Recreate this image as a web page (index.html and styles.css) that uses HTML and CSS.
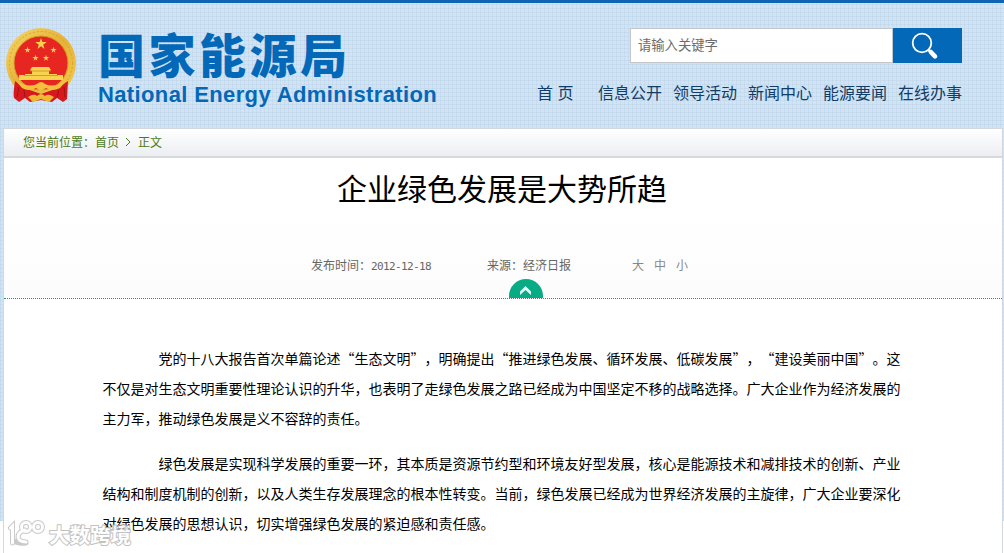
FILE: index.html
```
<!DOCTYPE html>
<html lang="zh-CN">
<head>
<meta charset="utf-8">
<title>企业绿色发展是大势所趋</title>
<link rel="stylesheet" href="styles.css">
</head>
<body>
<header class="header">
  <div class="brand">
    <svg class="emblem" width="72" height="76" viewBox="0 0 72 76">
      <defs>
        <linearGradient id="gold" x1="0" y1="0" x2="1" y2="1">
          <stop offset="0" stop-color="#f6d765"/><stop offset=".5" stop-color="#e6b238"/><stop offset="1" stop-color="#f4cb4c"/>
        </linearGradient>
        <path id="star" d="M0-6 1.4-1.9 5.7-1.9 2.2.7 3.5 4.9 0 2.3-3.5 4.9-2.2.7-5.7-1.9-1.4-1.9Z"/>
      </defs>
      <circle cx="36" cy="35" r="35" fill="url(#gold)"/>
      <circle cx="36" cy="35" r="31.5" fill="none" stroke="#d49c2a" stroke-width=".8" stroke-dasharray="2 2"/>
      <circle cx="36" cy="35" r="27" fill="#e72621" stroke="#d39a28" stroke-width="1"/>
      <g fill="#f8d34f">
        <use href="#star" x="36" y="16"/>
        <use href="#star" transform="translate(22.5 22) scale(.55)"/>
        <use href="#star" transform="translate(48.5 22) scale(.55)"/>
        <use href="#star" transform="translate(30.500 30) scale(.55)"/>
        <use href="#star" transform="translate(41 30) scale(.55)"/>
        <path d="M27 39h17l2 3-2 1v3h8v1h6v5H14v-5h6v-1h7v-3l-2-1Z"/>
      </g>
      <path d="M25 43h21M19 47.500h34" stroke="#d28a22" stroke-width=".8"/>
      <path d="M10 53C9 60 8 66 9 70L14 74 20 70 25 74 36 72 47 74 52 70 58 74 62 71 63 53 53 60 36 66 19 60Z" fill="#d7191d"/>
      <path d="M12 54Q24 60 32 56Q36 52 40 56Q48 60 60 54L55 60Q47 64 41 60L36 63 31 60Q24 64 17 60Z" fill="#f3c13d"/>
      <path d="M23 69Q29 65 32 68Q36 64 40 68Q43 65 49 69L44 74 36 71 28 74Z" fill="#f0b832"/>
      <path d="M14 59 12 69M19 62 20 69M54 62 52 69M59 59 60 69" stroke="#a01216" stroke-width="1"/>
    </svg>
    <div class="names">
      <div class="name-zh">国家能源局</div>
      <div class="name-en">National Energy Administration</div>
    </div>
  </div>
  <div class="tools">
    <div class="search">
      <div class="search-input">请输入关键字</div>
      <div class="search-button">
        <svg width="28" height="28" viewBox="0 0 28 28" fill="none" stroke="#fff">
          <circle cx="11" cy="11" r="9.3" stroke-width="1.8"/>
          <path d="M17.5 18 20 20.500" stroke-width="2.200"/>
          <path d="M19.800 20 24 24.300" stroke-width="4.600" stroke-linecap="round"/>
        </svg>
      </div>
    </div>
    <nav class="nav">
      <a class="home">首 页</a><a>信息公开</a><a>领导活动</a><a>新闻中心</a><a>能源要闻</a><a>在线办事</a>
    </nav>
  </div>
</header>
<main class="page">
  <div class="crumbs"><span>您当前位置：首页</span><svg width="6" height="10" viewBox="0 0 6 10" fill="none" stroke="#4c7a14"><path d="M1 1 5 5 1 9"/></svg><span>正文</span></div>
  <h1 class="title">企业绿色发展是大势所趋</h1>
  <div class="meta">
    <span>发布时间：<span class="date">2012-12-18</span></span>
    <span class="source">来源：经济日报</span>
    <span class="sizes"><span>大</span><span>中</span><span>小</span></span>
    <svg class="fold" width="34" height="19" viewBox="0 0 34 19">
      <path d="M0 19V17A17 17 0 0 1 34 17V19Z" fill="#08ac84"/>
      <path d="M11 12.500 16.500 7 22 12.500V16L16.500 11 11 16Z" fill="#e9fff8"/>
    </svg>
  </div>
  <article class="article">
    <p>党的十八大报告首次单篇论述“生态文明”，明确提出“推进绿色发展、循环发展、低碳发展”，“建设美丽中国”。这<br>不仅是对生态文明重要性理论认识的升华，也表明了走绿色发展之路已经成为中国坚定不移的战略选择。广大企业作为经济发展的<br>主力军，推动绿色发展是义不容辞的责任。</p>
    <p>绿色发展是实现科学发展的重要一环，其本质是资源节约型和环境友好型发展，核心是能源技术和减排技术的创新、产业<br>结构和制度机制的创新，以及人类生存发展理念的根本性转变。当前，绿色发展已经成为世界经济发展的主旋律，广大企业要深化<br>对绿色发展的思想认识，切实增强绿色发展的紧迫感和责任感。</p>
  </article>
</main>
<div class="watermark">
  <svg width="38" height="28" viewBox="0 0 38 28" fill="none" stroke-linecap="round">
    <g stroke="#bdbdbd" stroke-width="5"><path d="M2.500 8 4.500 6V23M5 20Q9 24 18 23M17 10Q10 12 10 17Q11 22 18 22"/><circle cx="18" cy="7" r="4.500"/><circle cx="30" cy="7" r="4.500"/></g>
    <g stroke="#fff" stroke-width="3"><path d="M2.500 8 4.500 6V23M17 10Q10 12 10 17Q11 22 18 22"/><circle cx="18" cy="7" r="4.500"/><circle cx="30" cy="7" r="4.500"/></g>
  </svg>
  <span>大数跨境</span>
</div>
</body>
</html>
```
FILE: styles.css
```
* { box-sizing: border-box; }
body {
  margin: 0;
  height: 553px;
  overflow: hidden;
  position: relative;
  font-family: "Liberation Sans", "Noto Sans CJK SC", sans-serif;
  text-spacing-trim: space-all;
  background:
    linear-gradient(#fff, #fff) 0 521px / 100% 32px no-repeat,
    linear-gradient(90deg, rgba(174, 200, 224, .27) 1px, transparent 1px) 0 0 / 4px 4px,
    linear-gradient(rgba(174, 200, 224, .27) 1px, transparent 1px) 0 0 / 4px 4px,
    #d1e4f6;
}
.header {
  height: 128px;
  border-top: 3px solid #1064b4;
  display: flex;
  justify-content: space-between;
  padding: 25px 42px 0 5px;
}
.brand { display: flex; gap: 21px; }
.names { color: #0468b8; white-space: nowrap; font-weight: 700; }
.name-zh {
  font: 900 47px/50px "Noto Sans CJK SC", sans-serif;
  letter-spacing: 3.500px;
}
.name-en {
  margin-top: 5px;
  font-size: 22px;
  line-height: 24px;
  letter-spacing: .37px;
}
.search { display: flex; width: 332px; height: 35px; margin-left: 93px; }
.search-input {
  flex: 1;
  border: 1px solid #c4c8cc;
  background: #fff;
  font-size: 13.330px;
  line-height: 33px;
  padding-left: 7px;
  color: #6c6c6c;
}
.search-button { width: 69px; background: #0468b8; padding: 4px 0 0 18px; }
.nav {
  display: flex;
  gap: 11px;
  margin-top: 17px;
  font: 16px/24px "Noto Sans CJK SC", sans-serif;
  color: #123c66;
  white-space: nowrap;
}
.home { width: 50px; word-spacing: 1px; }
.page {
  margin: 0 1px 0 3px;
  height: 425px;
  border: 1px solid #d3d8de;
  border-bottom: 0;
  background: #fff;
}
.crumbs {
  height: 29px;
  border-bottom: 2px solid #d6d9dd;
  background: linear-gradient(#fff, #ebeef2);
  display: flex;
  align-items: center;
  gap: 6px;
  padding: 0 0 2px 19px;
  font-size: 12px;
  color: #4c7a14;
}
.crumbs span:last-child { margin-left: 1px; }
.title {
  margin: 0;
  padding: 5px 0 3px 333px;
  font: 400 30px/48px "Noto Sans CJK SC", sans-serif;
  color: #000;
}
.meta {
  position: relative;
  height: 85px;
  padding: 43px 0 0 307px;
  border-bottom: 1px dotted #1c9692;
  display: flex;
  font-size: 12px;
  line-height: 18px;
  color: #666;
  background: linear-gradient(#fff, #fcfcfc);
}
.date { font-family: "DejaVu Sans Mono", monospace; font-size: 11px; letter-spacing: -.620px; }
.source { margin: 0 61px 0 56px; }
.sizes { display: flex; gap: 10px; color: #888; }
.fold { position: absolute; left: 505px; bottom: 0; }
.article {
  padding: 44px 0 0 98.500px;
  font: 14px/30px "Noto Sans CJK SC", sans-serif;
  color: #000;
  white-space: nowrap;
}
.article p { margin: 0 0 15px; text-indent: 56px; }
.watermark {
  position: absolute;
  left: 8px;
  top: 520px;
  display: flex;
  gap: 3px;
  opacity: .8;
  font: 700 20.500px/29px "Noto Sans CJK SC", sans-serif;
  color: #fff;
  -webkit-text-stroke: 2px #b4b4b4;
  paint-order: stroke fill;
}
```
